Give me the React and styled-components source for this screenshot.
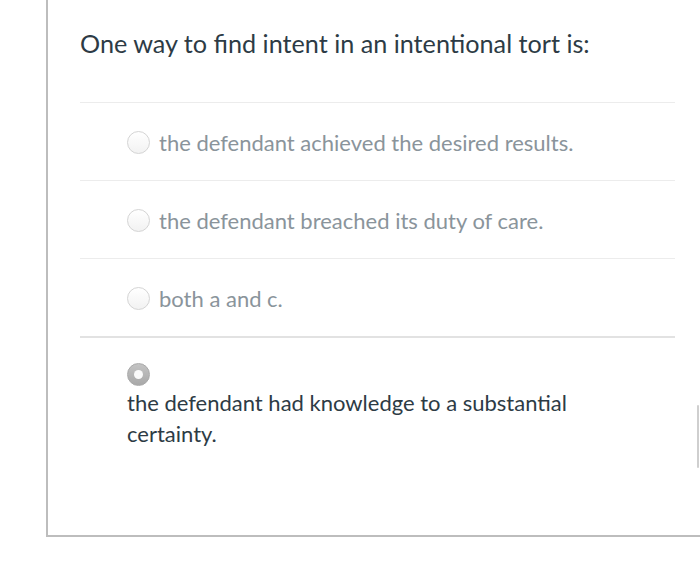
import React from "react";
import styled, { createGlobalStyle } from "styled-components";

const Global = createGlobalStyle`
  html, body { margin: 0; padding: 0; background: #ffffff; }
  body { font-family: Lato, "Open Sans", sans-serif; }
`;

const Page = styled.div`
  position: relative;
  width: 700px;
  height: 577px;
  overflow: hidden;
  background: #fff;
`;

const Card = styled.div`
  margin-left: 46px;
  width: 720px;
  height: 537px;
  box-sizing: border-box;
  border-left: 2px solid #bdbdbd;
  border-bottom: 2px solid #bdbdbd;
  padding: 28px 0 0 32px;
`;

const Title = styled.h1`
  margin: 0;
  font-size: 25.2px;
  line-height: 30px;
  font-weight: 400;
  color: #2d3b45;
`;

const Answers = styled.div`
  margin-top: 44px;
  width: 595px;
`;

const Row = styled.div`
  border-top: ${(p) => (p.$strong ? "2px solid #e2e2e2" : "1px solid #ececec")};
  display: flex;
  flex-direction: ${(p) => (p.$stacked ? "column" : "row")};
  align-items: ${(p) => (p.$stacked ? "flex-start" : "center")};
  gap: ${(p) => (p.$stacked ? "0" : "9px")};
  padding: ${(p) => (p.$stacked ? "25px 0 0 47px" : "2px 0 1px 47px")};
  height: ${(p) => (p.$stacked ? "auto" : "74px")};
`;

const Radio = styled.span`
  flex: none;
  width: 23px;
  height: 23px;
  box-sizing: border-box;
  border-radius: 50%;
  border: 1px solid #d4d4d4;
  background: linear-gradient(#ffffff, #f2f2f2);
  display: flex;
  align-items: center;
  justify-content: center;
  ${(p) =>
    p.$checked &&
    `
    border: 1px solid #a9a9a9;
    background: linear-gradient(#c4c4c4, #a8a8a8);
    margin-bottom: 1px;
    &::after {
      content: "";
      width: 9px;
      height: 9px;
      border-radius: 50%;
      background: #fafafa;
    }
  `}
`;

const Label = styled.span`
  font-size: 22px;
  line-height: 31px;
  color: ${(p) => (p.$selected ? "#2d3b45" : "#8a949b")};
  max-width: 470px;
`;

const Scrollbar = styled.div`
  position: absolute;
  right: 1px;
  top: 405px;
  width: 2px;
  height: 63px;
  border-radius: 1px;
  background: #cfcfcf;
`;

const options = [
  "the defendant achieved the desired results.",
  "the defendant breached its duty of care.",
  "both a and c.",
];

export default function App() {
  return (
    <Page>
      <Global />
      <Card>
        <Title>One way to find intent in an intentional tort is:</Title>
        <Answers>
          {options.map((o) => (
            <Row key={o}>
              <Radio />
              <Label>{o}</Label>
            </Row>
          ))}
          <Row $stacked $strong>
            <Radio $checked />
            <Label $selected>the defendant had knowledge to a substantial certainty.</Label>
          </Row>
        </Answers>
      </Card>
      <Scrollbar />
    </Page>
  );
}
